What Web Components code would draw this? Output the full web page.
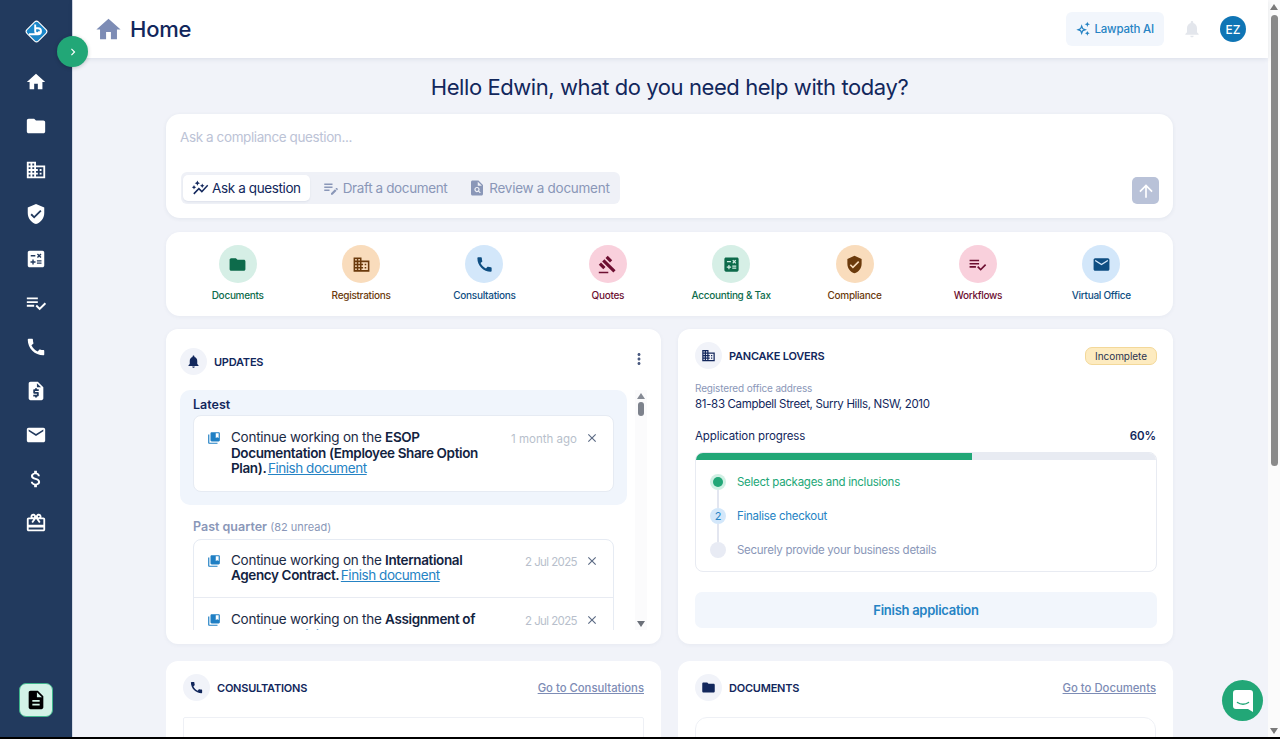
<!DOCTYPE html>
<html>
<head>
<meta charset="utf-8">
<title>Home</title>
<style>
html, body { margin: 0; height: 100%; overflow: hidden; }
body { font-family: Inter, "Noto Sans", sans-serif; color: #12275c; background: #000; }
</style>
</head>
<body>
<lp-app></lp-app>

<script>
const ICONS = {
    home: "M10 20v-6h4v6h5v-8h3L12 3 2 12h3v8z",
    folder: "M10 4H4c-1.1 0-1.99.9-1.99 2L2 18c0 1.1.9 2 2 2h16c1.1 0 2-.9 2-2V8c0-1.1-.9-2-2-2h-8l-2-2z",
    domain: "M12 7V3H2v18h20V7H12zM6 19H4v-2h2v2zm0-4H4v-2h2v2zm0-4H4V9h2v2zm0-4H4V5h2v2zm4 12H8v-2h2v2zm0-4H8v-2h2v2zm0-4H8V9h2v2zm0-4H8V5h2v2zm10 12h-8v-2h2v-2h-2v-2h2v-2h-2V9h8v10zm-2-8h-2v2h2v-2zm0 4h-2v2h2v-2z",
    shield: "M12 1L3 5v6c0 5.55 3.84 10.74 9 12 5.16-1.26 9-6.45 9-12V5l-9-4zm-2 16l-4-4 1.41-1.41L10 14.17l6.59-6.59L18 9l-8 8z",
    calculate: "M19,3H5C3.9,3,3,3.9,3,5v14c0,1.1,0.9,2,2,2h14c1.1,0,2-0.9,2-2V5C21,3.9,20.1,3,19,3z M13.03,7.06L14.09,6l1.41,1.41L16.91,6l1.06,1.06l-1.41,1.41l1.41,1.41l-1.06,1.06L15.5,9.54l-1.41,1.41l-1.06-1.06l1.41-1.41L13.03,7.06z M6.25,7.72h5v1.5h-5V7.72z M11.5,16h-2v2H8v-2H6v-1.5h2v-2h1.5v2h2V16z M18,17.25h-5v-1.5h5V17.25z M18,14.75h-5v-1.5h5V14.75z",
    checklist: "M14 10H2v2h12v-2zm0-4H2v2h12V6zM2 16h8v-2H2v2zm19.5-4.5L23 13l-6.99 7-4.51-4.5L13 14l3.01 3 5.49-5.5z",
    phone: "M20.01 15.38c-1.23 0-2.42-.2-3.53-.56-.35-.12-.74-.03-1.01.24l-1.57 1.97c-2.83-1.35-5.48-3.9-6.89-6.83l1.95-1.66c.27-.28.35-.67.24-1.02-.37-1.11-.56-2.3-.56-3.53 0-.54-.45-.99-.99-.99H4.19C3.65 3 3 3.24 3 3.99 3 13.28 10.73 21 20.01 21c.71 0 .99-.63.99-1.18v-3.45c0-.54-.45-.99-.99-.99z",
    quote: "M14 2H6c-1.1 0-1.99.9-1.99 2L4 20c0 1.1.89 2 1.99 2H18c1.1 0 2-.9 2-2V8l-6-6zm1 10h-4v1h3c.55 0 1 .45 1 1v3c0 .55-.45 1-1 1h-1v1h-2v-1H9v-2h4v-1h-3c-.55 0-1-.45-1-1v-3c0-.55.45-1 1-1h1V9h2v1h2v2zm-2-4V3.5L17.5 8H13z",
    email: "M20 4H4c-1.1 0-1.99.9-1.99 2L2 18c0 1.1.9 2 2 2h16c1.1 0 2-.9 2-2V6c0-1.1-.9-2-2-2zm0 4l-8 5-8-5V6l8 5 8-5v2z",
    money: "M11.8 10.9c-2.27-.59-3-1.2-3-2.15 0-1.09 1.01-1.85 2.7-1.85 1.78 0 2.44.85 2.5 2.1h2.21c-.07-1.72-1.12-3.3-3.21-3.81V3h-3v2.16c-1.94.42-3.5 1.68-3.5 3.61 0 2.31 1.91 3.46 4.7 4.13 2.5.6 3 1.48 3 2.41 0 .69-.49 1.79-2.7 1.79-2.06 0-2.87-.92-2.98-2.1h-2.2c.12 2.19 1.76 3.42 3.68 3.83V21h3v-2.15c1.95-.37 3.5-1.5 3.5-3.55 0-2.84-2.43-3.81-4.7-4.4z",
    redeem: "M20 6h-2.18c.11-.31.18-.65.18-1 0-1.66-1.34-3-3-3-1.05 0-1.96.54-2.5 1.35l-.5.67-.5-.68C10.96 2.54 10.05 2 9 2 7.34 2 6 3.34 6 5c0 .35.07.69.18 1H4c-1.11 0-1.99.89-1.99 2L2 19c0 1.11.89 2 2 2h16c1.11 0 2-.89 2-2V8c0-1.11-.89-2-2-2zm-5-2c.55 0 1 .45 1 1s-.45 1-1 1-1-.45-1-1 .45-1 1-1zM9 4c.55 0 1 .45 1 1s-.45 1-1 1-1-.45-1-1 .45-1 1-1zm11 15H4v-2h16v2zm0-5H4V8h5.08L7 10.83 8.62 12 11 8.76l1-1.36 1 1.36L15.38 12 17 10.83 14.92 8H20v6z",
    description: "M14 2H6c-1.1 0-1.99.9-1.99 2L4 20c0 1.1.89 2 1.99 2H18c1.1 0 2-.9 2-2V8l-6-6zm2 16H8v-2h8v2zm0-4H8v-2h8v2zm-3-5V3.5L18.5 9H13z",
    gavel: "M1 21h12v2H1zM5.245 8.07l2.83-2.827 14.14 14.142-2.828 2.828zM12.317 1l5.657 5.656-2.83 2.83-5.654-5.66zM3.825 9.485l5.657 5.657-2.828 2.828-5.657-5.657z",
    bell: "M12 22c1.1 0 2-.9 2-2h-4c0 1.1.89 2 2 2zm6-6v-5c0-3.07-1.64-5.64-4.5-6.32V4c0-.83-.67-1.5-1.5-1.5s-1.5.67-1.5 1.5v.68C7.63 5.36 6 7.92 6 11v5l-2 2v1h16v-1l-2-2z",
    bookmarks: "M4 6H2v14c0 1.1.9 2 2 2h14v-2H4V6zm16-4H8c-1.1 0-2 .9-2 2v12c0 1.1.9 2 2 2h12c1.1 0 2-.9 2-2V4c0-1.1-.9-2-2-2zm0 10l-2.5-1.5L15 12V4h5v8z",
    close: "M19 6.41L17.59 5 12 10.59 6.41 5 5 6.41 10.59 12 5 17.59 6.41 19 12 13.41 17.59 19 19 17.59 13.41 12z",
    more: "M12 8c1.1 0 2-.9 2-2s-.9-2-2-2-2 .9-2 2 .9 2 2 2zm0 2c-1.1 0-2 .9-2 2s.9 2 2 2 2-.9 2-2-.9-2-2-2zm0 6c-1.1 0-2 .9-2 2s.9 2 2 2 2-.9 2-2-.9-2-2-2z",
    editNote: "M3 10h11v2H3v-2zm0-2h11V6H3v2zm0 8h7v-2H3v2zm15.01-3.13l.71-.71c.39-.39 1.02-.39 1.41 0l.71.71c.39.39.39 1.02 0 1.41l-.71.71-2.12-2.12zm-.71.71l-5.3 5.3V21h2.12l5.3-5.3-2.12-2.12z",
    findPage: "M14 2H6c-1.1 0-1.99.9-1.99 2L4 20c0 1.1.89 2 1.99 2H18c1.1 0 2-.9 2-2V8l-6-6zm-1 1.5L18.5 9H13V3.5zM12 10.5a3.5 3.5 0 0 1 2.96 5.37L17 17.9 15.9 19l-2.03-2.04A3.5 3.5 0 1 1 12 10.5zm0 1.6a1.9 1.9 0 1 0 0 3.8 1.9 1.9 0 0 0 0-3.8z",
    autoGraph: "M14.06 9.94L12 9l2.06-.94L15 6l.94 2.06L18 9l-2.06.94L15 12l-.94-2.06zM4 14l.94-2.06L7 11l-2.06-.94L4 8l-.94 2.06L1 11l2.06.94L4 14zm4.5-5l1.09-2.41L12 5.5 9.59 4.41 8.5 2 7.41 4.41 5 5.5l2.41 1.09L8.5 9zm-4 11.5l6-6.01 4 4L23 8.93l-1.41-1.41-7.09 7.97-4-4L3 19l1.5 1.5z",
    up: "M4 12l1.41 1.41L11 7.83V20h2V7.83l5.58 5.59L20 12l-8-8-8 8z",
    chevron: "M10 6L8.59 7.41 13.17 12l-4.58 4.59L10 18l6-6z",
    sparkle: "M10 5l2.2 5.8L18 13l-5.8 2.2L10 21l-2.2-5.8L2 13l5.8-2.2L10 5zm0 5.2L9.1 12.1 7.2 13l1.9.9.9 1.9.9-1.9 1.9-.9-1.9-.9L10 10.2zM18.5 1l1.1 2.9 2.9 1.1-2.9 1.1L18.5 9l-1.1-2.9L14.5 5l2.9-1.1L18.5 1zm0 14l1.1 2.4 2.4 1.1-2.4 1.1-1.1 2.4-1.1-2.4-2.4-1.1 2.4-1.1 1.1-2.4z"
};

class LpIcon extends HTMLElement {
    static get observedAttributes() {
        return ["name", "size"]
    }

    constructor() {
        super();
        this.attachShadow({ mode: "open" });
    }

    connectedCallback() {
        this.render();
    }

    attributeChangedCallback() {
        this.render();
    }

    render() {
        const size = this.getAttribute("size") ?? 24;
        const path = ICONS[this.getAttribute("name")] ?? "";
        this.shadowRoot.innerHTML = `
            <style>
            :host { display: inline-flex; flex: none; width: ${size}px; height: ${size}px; color: inherit; }
            svg { width: 100%; height: 100%; fill: currentColor; display: block; }
            </style>
            <svg viewBox="0 0 24 24"><path fill-rule="evenodd" d="${path}"/></svg>`;
    }
}
customElements.define("lp-icon", LpIcon);

const sidebarTemplate = document.createElement("template");
sidebarTemplate.innerHTML = `
<style>
:host { display: flex; flex-direction: column; align-items: center; flex: none; width: 73px; height: 100%; background: #223a5e; border-right: 1px solid #d5dae6; box-sizing: border-box; }
.logo { margin-top: 19px; width: 25px; height: 25px; flex: none; }
nav { display: flex; flex-direction: column; align-items: center; gap: 22.15px; margin-top: 27px; color: #fff; }
.doc { margin-top: auto; margin-bottom: 20px; width: 34px; height: 34px; box-sizing: border-box; border-radius: 7px; background: #d3f3e7; border: 1px solid #3fb58c; display: flex; align-items: center; justify-content: center; color: #000; }
</style>
<svg class="logo" viewBox="0 0 25 25">
  <rect x="4.5" y="4.5" width="16" height="16" rx="2.5" transform="rotate(45 12.5 12.5)" fill="#1a86c8" stroke="#fff" stroke-width="1.1"/>
  <path d="M5 15.2h9a3 3 0 0 0 0-6h-2.6M11.2 5.5v6.8a2 2 0 0 0 4 0" fill="none" stroke="#fff" stroke-width="1.9"/>
</svg>
<nav>
  <lp-icon name="home" size="22"></lp-icon>
  <lp-icon name="folder" size="22"></lp-icon>
  <lp-icon name="domain" size="22"></lp-icon>
  <lp-icon name="shield" size="22"></lp-icon>
  <lp-icon name="calculate" size="22"></lp-icon>
  <lp-icon name="checklist" size="22"></lp-icon>
  <lp-icon name="phone" size="22"></lp-icon>
  <lp-icon name="quote" size="22"></lp-icon>
  <lp-icon name="email" size="22"></lp-icon>
  <lp-icon name="money" size="22"></lp-icon>
  <lp-icon name="redeem" size="22"></lp-icon>
</nav>
<div class="doc"><lp-icon name="description" size="22"></lp-icon></div>
`;

class LpSidebar extends HTMLElement {
    connectedCallback() {
        this.attachShadow({ mode: "open" }).appendChild(sidebarTemplate.content.cloneNode(true));
    }
}
customElements.define("lp-sidebar", LpSidebar);

const headerTemplate = document.createElement("template");
headerTemplate.innerHTML = `
<style>
:host { display: flex; align-items: center; flex: none; height: 58px; background: #fff; box-shadow: 0 1px 5px rgba(30,50,90,.1); position: relative; z-index: 2; padding: 0 22px 0 21px; }
h1 { font-size: 22px; font-weight: 500; margin: 0 0 0 7px; color: #12275c; letter-spacing: -.25px; }
.house { color: #7d8cb5; }
.ai { margin-left: auto; display: flex; align-items: center; gap: 3px; height: 34px; padding: 0 10px 0 9px; background: #f2f6fc; border-radius: 6px; color: #2583c4; font-size: 11.5px; font-weight: 500; letter-spacing: -.2px; }
.bell { color: #e3e6ec; margin-left: 18px; }
.avatar { margin-left: 18px; width: 26px; height: 26px; border-radius: 50%; background: #0f75b5; color: #fff; font-size: 12px; font-weight: 500; display: flex; align-items: center; justify-content: center; }
</style>
<lp-icon class="house" name="home" size="29"></lp-icon>
<h1>Home</h1>
<div class="ai"><lp-icon name="sparkle" size="16"></lp-icon>Lawpath AI</div>
<lp-icon class="bell" name="bell" size="20"></lp-icon>
<div class="avatar">EZ</div>
`;

class LpHeader extends HTMLElement {
    connectedCallback() {
        this.attachShadow({ mode: "open" }).appendChild(headerTemplate.content.cloneNode(true));
    }
}
customElements.define("lp-header", LpHeader);

const askTemplate = document.createElement("template");
askTemplate.innerHTML = `
<style>
:host { display: block; height: 104px; box-sizing: border-box; background: #fff; border-radius: 14px; box-shadow: 0 1px 4px rgba(30,50,90,.07); padding: 15px 14px 13px; position: relative; }
.placeholder { font-size: 13.5px; color: #bcc3d6; line-height: 17px; letter-spacing: -.4px; }
.row { display: flex; align-items: flex-end; justify-content: space-between; margin-top: 26px; }
.tabs { display: flex; align-items: center; height: 32px; box-sizing: border-box; padding: 0 0 0 2px; margin-left: 1px; background: #eff1f7; border-radius: 6px; gap: 4px; }
.tab { display: flex; align-items: center; gap: 3px; height: 26px; padding: 0 9px 0 8px; font-size: 13.5px; letter-spacing: -.38px; color: #8a97b8; border-radius: 5px; white-space: nowrap; }
.tab:last-child { letter-spacing: -.28px; padding-right: 10px; }
.tab.active { background: #fff; color: #12275c; box-shadow: 0 1px 2px rgba(30,50,90,.08); }
.send { width: 27px; height: 27px; border-radius: 5px; background: #b9c2d8; color: #fff; display: flex; align-items: center; justify-content: center; }
</style>
<div class="placeholder">Ask a compliance question...</div>
<div class="row">
  <div class="tabs">
    <div class="tab active"><lp-icon name="autoGraph" size="18"></lp-icon>Ask a question</div>
    <div class="tab"><lp-icon name="editNote" size="18"></lp-icon>Draft a document</div>
    <div class="tab"><lp-icon name="findPage" size="18"></lp-icon>Review a document</div>
  </div>
  <div class="send"><lp-icon name="up" size="20"></lp-icon></div>
</div>
`;

class LpAsk extends HTMLElement {
    connectedCallback() {
        this.attachShadow({ mode: "open" }).appendChild(askTemplate.content.cloneNode(true));
    }
}
customElements.define("lp-ask", LpAsk);

const shortcutTemplate = document.createElement("template");
shortcutTemplate.innerHTML = `
<style>
:host { display: flex; flex-direction: column; align-items: center; font-size: 10px; font-weight: 500; letter-spacing: -.28px; }
.circle { width: 38px; height: 38px; border-radius: 50%; display: flex; align-items: center; justify-content: center; margin-bottom: 6px; }
</style>
<div class="circle"><lp-icon size="19"></lp-icon></div>
<slot></slot>
`;

class LpShortcut extends HTMLElement {
    connectedCallback() {
        const tone = {
            green: ["#d6efe6", "#0d6b4b"],
            orange: ["#f9dcbc", "#6b3a0c"],
            blue: ["#d3e7fa", "#0e4e82"],
            pink: ["#f9d0dc", "#6d0f31"]
        }[this.getAttribute("tone")];
        const copy = shortcutTemplate.content.cloneNode(true);
        copy.querySelector(".circle").style.background = tone[0];
        copy.querySelector("lp-icon").setAttribute("name", this.getAttribute("icon"));
        this.style.color = tone[1];
        this.attachShadow({ mode: "open" }).appendChild(copy);
    }
}
customElements.define("lp-shortcut", LpShortcut);

const shortcutsTemplate = document.createElement("template");
shortcutsTemplate.innerHTML = `
<style>
:host { display: grid; grid-template-columns: repeat(8, 1fr); height: 84px; box-sizing: border-box; background: #fff; border-radius: 14px; padding: 13px 10px 0; box-shadow: 0 1px 4px rgba(30,50,90,.05); }
</style>
<slot></slot>
`;

class LpShortcuts extends HTMLElement {
    connectedCallback() {
        this.attachShadow({ mode: "open" }).appendChild(shortcutsTemplate.content.cloneNode(true));
    }
}
customElements.define("lp-shortcuts", LpShortcuts);

const cardHeadTemplate = document.createElement("template");
cardHeadTemplate.innerHTML = `
<style>
:host { display: flex; align-items: center; gap: 7px; }
.dot { width: 27px; height: 27px; border-radius: 50%; background: #f1f3f9; display: flex; align-items: center; justify-content: center; color: #12275c; }
.title { font-size: 11px; font-weight: 600; color: #12275c; letter-spacing: -.22px; }
.end { margin-left: auto; display: flex; align-items: center; }
</style>
<div class="dot"><lp-icon size="15"></lp-icon></div>
<div class="title"><slot></slot></div>
<div class="end"><slot name="end"></slot></div>
`;

class LpCardHead extends HTMLElement {
    connectedCallback() {
        const copy = cardHeadTemplate.content.cloneNode(true);
        copy.querySelector("lp-icon").setAttribute("name", this.getAttribute("icon"));
        this.attachShadow({ mode: "open" }).appendChild(copy);
    }
}
customElements.define("lp-card-head", LpCardHead);

const noticeTemplate = document.createElement("template");
noticeTemplate.innerHTML = `
<style>
:host { display: flex; align-items: flex-start; padding: 13px 14px 14px 13px; box-sizing: border-box; font-size: 13.5px; letter-spacing: -.25px; line-height: 15.6px; color: #1c2b45; }
:host(:not(:last-child)) { border-bottom: 1px solid #e8ebf2; padding-bottom: 13px; }
:host(:last-child:not(:first-child)) { padding-top: 14px; }
.book { color: #1f7fc4; margin: 1px 10px 0 0; }
.text { flex: none; width: 252px; }
.time { flex: none; font-size: 11.5px; letter-spacing: var(--time-spacing, 0); color: #b8bfcc; margin: 2px 0 0 auto; }
.x { color: #5c6b85; margin: 1px 0 0 8px; }
::slotted(b) { font-weight: 600; color: #12233f; letter-spacing: -.38px; }
::slotted(a) { color: #2583c4; text-decoration: underline; letter-spacing: -.45px; margin-left: -2px; }
</style>
<lp-icon class="book" name="bookmarks" size="14"></lp-icon>
<div class="text"><slot></slot></div>
<span class="time"></span>
<lp-icon class="x" name="close" size="14"></lp-icon>
`;

class LpNotice extends HTMLElement {
    connectedCallback() {
        const copy = noticeTemplate.content.cloneNode(true);
        copy.querySelector(".time").textContent = this.getAttribute("time");
        this.attachShadow({ mode: "open" }).appendChild(copy);
    }
}
customElements.define("lp-notice", LpNotice);

const updatesTemplate = document.createElement("template");
updatesTemplate.innerHTML = `
<style>
:host { display: flex; flex-direction: column; box-sizing: border-box; height: 315px; background: #fff; border-radius: 12px; padding: 19px 14px 14px 14px; box-shadow: 0 1px 4px rgba(30,50,90,.05); }
.more { color: #4a5a80; margin: -6px -1px 0 0; }
.body { display: flex; flex: 1; min-height: 0; margin-top: 15px; }
.list { flex: none; width: 447px; overflow: hidden; }
.latest { background: #f0f5fc; border-radius: 10px; padding: 7px 13px 13px; }
h3 { font-size: 12.5px; font-weight: 600; margin: 0 0 3px; line-height: 15px; color: #12275c; }
.past { padding: 14px 13px 0; --time-spacing: -.6px; }
.past h3 { color: #8a97b8; margin: 0; }
.past h3 span { font-weight: 400; font-size: 11px; }
.group { background: #fff; border: 1px solid #e6ebf3; border-radius: 8px; }
.latest lp-notice { padding-top: 14px; }
.past .group { border-radius: 8px 8px 0 0; margin-top: 4px; }
.bar { flex: none; width: 12px; margin-left: 8px; background: #fbfbfc; display: flex; flex-direction: column; align-items: center; }
.tri-up { width: 0; height: 0; border: 4.5px solid transparent; border-top: 0; border-bottom: 6px solid #858a94; margin-top: 3px; }
.tri-down { width: 0; height: 0; border: 4.5px solid transparent; border-bottom: 0; border-top: 6px solid #6b7079; margin-top: auto; margin-bottom: 3px; }
.thumb { width: 6px; height: 14px; border-radius: 3px; background: #7d828c; margin-top: 3px; }
</style>
<lp-card-head icon="bell">UPDATES
  <lp-icon class="more" slot="end" name="more" size="18"></lp-icon>
</lp-card-head>
<div class="body">
  <div class="list">
    <div class="latest">
      <h3>Latest</h3>
      <div class="group">
        <lp-notice time="1 month ago">Continue working on the <b>ESOP Documentation (Employee Share Option Plan).</b> <a>Finish document</a></lp-notice>
      </div>
    </div>
    <div class="past">
      <h3>Past quarter <span>(82 unread)</span></h3>
      <div class="group">
        <lp-notice time="2 Jul 2025">Continue working on the <b>International Agency Contract.</b> <a>Finish document</a></lp-notice>
        <lp-notice time="2 Jul 2025">Continue working on the <b>Assignment of Copyright.</b> <a>Finish document</a></lp-notice>
      </div>
    </div>
  </div>
  <div class="bar"><div class="tri-up"></div><div class="thumb"></div><div class="tri-down"></div></div>
</div>
`;

class LpUpdates extends HTMLElement {
    connectedCallback() {
        this.attachShadow({ mode: "open" }).appendChild(updatesTemplate.content.cloneNode(true));
    }
}
customElements.define("lp-updates", LpUpdates);

const companyTemplate = document.createElement("template");
companyTemplate.innerHTML = `
<style>
:host { display: flex; flex-direction: column; box-sizing: border-box; height: 315px; background: #fff; border-radius: 12px; padding: 13px 16px 0 17px; box-shadow: 0 1px 4px rgba(30,50,90,.05); color: #12275c; }
.badge { font-size: 10px; letter-spacing: -.05px; padding: 0 9px; height: 18px; line-height: 16px; box-sizing: border-box; border: 1px solid #f3d899; background: #fdebc0; border-radius: 7px; color: #2b3350; }
.label { font-size: 10px; letter-spacing: -.15px; color: #8a97b8; margin-top: 12px; line-height: 14px; }
.addr { font-size: 11.5px; letter-spacing: -.33px; line-height: 15px; margin-top: 2px; }
.progress { display: flex; justify-content: space-between; font-size: 11.5px; letter-spacing: -.1px; margin-top: 17px; line-height: 15px; }
.progress b { font-weight: 600; font-size: 11.5px; margin-right: 1px; }
.box { margin-top: 8px; height: 120px; box-sizing: border-box; border: 1px solid #e8ebf2; border-radius: 8px; overflow: hidden; }
.track { height: 7px; background: #e8ebf2; }
.fill { height: 100%; width: 60%; background: #22a777; }
.steps { display: flex; flex-direction: column; gap: 18px; padding: 14px 14px 0; position: relative; }
.step { display: flex; align-items: center; gap: 11px; font-size: 11.5px; letter-spacing: -.27px; line-height: 16px; }
.mark { width: 16px; height: 16px; border-radius: 50%; display: flex; align-items: center; justify-content: center; font-size: 11px; flex: none; position: relative; }
.mark.done { background: #d0f0e4; }
.mark.done::after { content: ""; width: 10px; height: 10px; border-radius: 50%; background: #22a777; }
.mark.now { background: #d3e7fa; color: #2583c4; }
.mark.todo { background: #e8ebf4; }
.step:not(:last-child) .mark::before { content: ""; position: absolute; left: 7px; top: 16px; width: 2px; height: 18px; background: #e3e6f0; }
.step.g { color: #22a777; }
.step.b { color: #2583c4; }
.step.t { color: #8a97b8; }
button { margin-top: 20px; height: 36px; border: 0; border-radius: 7px; background: #f2f6fc; color: #2583c4; font: 600 13px Inter, "Noto Sans", sans-serif; letter-spacing: -.28px; }
</style>
<lp-card-head icon="domain">PANCAKE LOVERS
  <span class="badge" slot="end">Incomplete</span>
</lp-card-head>
<div class="label">Registered office address</div>
<div class="addr">81-83 Campbell Street, Surry Hills, NSW, 2010</div>
<div class="progress"><span>Application progress</span><b>60%</b></div>
<div class="box">
  <div class="track"><div class="fill"></div></div>
  <div class="steps">
    <div class="step g"><span class="mark done"></span>Select packages and inclusions</div>
    <div class="step b"><span class="mark now">2</span>Finalise checkout</div>
    <div class="step t"><span class="mark todo"></span>Securely provide your business details</div>
  </div>
</div>
<button>Finish application</button>
`;

class LpCompany extends HTMLElement {
    connectedCallback() {
        this.attachShadow({ mode: "open" }).appendChild(companyTemplate.content.cloneNode(true));
    }
}
customElements.define("lp-company", LpCompany);

const linkCardTemplate = document.createElement("template");
linkCardTemplate.innerHTML = `
<style>
:host { display: block; height: 76px; overflow: hidden; box-sizing: border-box; background: #fff; border-radius: 12px 12px 0 0; padding: 13px 17px 0; }
a { font-size: 11.3px; font-weight: 500; color: #7d8cb5; text-decoration: underline; }
.inner { margin-top: 16px; height: 40px; border: 1px solid #eef0f5; border-radius: var(--inner-radius, 2px); }
</style>
<lp-card-head><slot></slot><a slot="end"></a></lp-card-head>
<div class="inner"></div>
`;

class LpLinkCard extends HTMLElement {
    connectedCallback() {
        const copy = linkCardTemplate.content.cloneNode(true);
        copy.querySelector("lp-card-head").setAttribute("icon", this.getAttribute("icon"));
        copy.querySelector("a").textContent = this.getAttribute("link");
        this.attachShadow({ mode: "open" }).appendChild(copy);
    }
}
customElements.define("lp-link-card", LpLinkCard);

const pageScrollTemplate = document.createElement("template");
pageScrollTemplate.innerHTML = `
<style>
:host { display: flex; flex-direction: column; align-items: center; flex: none; width: 12px; background: #fbfbfb; }
.up { width: 0; height: 0; border: 4.5px solid transparent; border-top: 0; border-bottom: 6px solid #7a7a7a; margin-top: 4px; }
.thumb { width: 7px; height: 451px; border-radius: 4px; background: #8a8a8a; margin-top: 5px; }
.down { width: 0; height: 0; border: 4.5px solid transparent; border-bottom: 0; border-top: 6px solid #7a7a7a; margin-top: auto; margin-bottom: 3px; }
</style>
<div class="up"></div><div class="thumb"></div><div class="down"></div>
`;

class LpPageScroll extends HTMLElement {
    connectedCallback() {
        this.attachShadow({ mode: "open" }).appendChild(pageScrollTemplate.content.cloneNode(true));
    }
}
customElements.define("lp-page-scroll", LpPageScroll);

const appTemplate = document.createElement("template");
appTemplate.innerHTML = `
<style>
:host { display: flex; height: 737px; position: relative; overflow: hidden; background: #f1f3f9; }
.main { flex: 1; min-width: 0; display: flex; flex-direction: column; }
.content { flex: 1; min-height: 0; overflow: hidden; padding: 0 95px 0 93px; }
h2 { text-align: center; font-size: 22px; font-weight: 400; letter-spacing: -.42px; margin: 0; padding: 16px 0 14px; line-height: 26px; color: #12275c; }
.stack { display: flex; flex-direction: column; gap: 14px; }
.cols { display: grid; grid-template-columns: 495px 495px; column-gap: 17px; row-gap: 17px; margin-top: -1px; }
.rounded { --inner-radius: 12px; }
.expand { position: absolute; left: 57px; top: 36px; width: 31px; height: 31px; border-radius: 50%; background: #22a777; color: #fff; display: flex; align-items: center; justify-content: center; box-shadow: 0 1px 4px rgba(0,0,0,.2); z-index: 3; }
.chat { position: absolute; left: 1222px; top: 680px; width: 41px; height: 41px; border-radius: 50%; background: #22a777; display: flex; align-items: center; justify-content: center; z-index: 3; }
</style>
<lp-sidebar></lp-sidebar>
<div class="main">
  <lp-header></lp-header>
  <div class="content">
    <h2>Hello Edwin, what do you need help with today?</h2>
    <div class="stack">
      <lp-ask></lp-ask>
      <lp-shortcuts>
        <lp-shortcut tone="green" icon="folder">Documents</lp-shortcut>
        <lp-shortcut tone="orange" icon="domain">Registrations</lp-shortcut>
        <lp-shortcut tone="blue" icon="phone">Consultations</lp-shortcut>
        <lp-shortcut tone="pink" icon="gavel">Quotes</lp-shortcut>
        <lp-shortcut tone="green" icon="calculate">Accounting &amp; Tax</lp-shortcut>
        <lp-shortcut tone="orange" icon="shield">Compliance</lp-shortcut>
        <lp-shortcut tone="pink" icon="checklist">Workflows</lp-shortcut>
        <lp-shortcut tone="blue" icon="email">Virtual Office</lp-shortcut>
      </lp-shortcuts>
      <div class="cols">
        <lp-updates></lp-updates>
        <lp-company></lp-company>
        <lp-link-card icon="phone" link="Go to Consultations">CONSULTATIONS</lp-link-card>
        <lp-link-card class="rounded" icon="folder" link="Go to Documents">DOCUMENTS</lp-link-card>
      </div>
    </div>
  </div>
</div>
<lp-page-scroll></lp-page-scroll>
<div class="expand"><lp-icon name="chevron" size="14"></lp-icon></div>
<div class="chat">
  <svg width="20" height="22" viewBox="0 0 20 22"><path d="M3 0h14a3 3 0 0 1 3 3v19l-5-3H3a3 3 0 0 1-3-3V3a3 3 0 0 1 3-3z" fill="#fff"/><path d="M4.5 12.5c3 2.2 8 2.2 11 0" fill="none" stroke="#22a777" stroke-width="1.5" stroke-linecap="round"/></svg>
</div>
`;

class LpApp extends HTMLElement {
    connectedCallback() {
        this.attachShadow({ mode: "open" }).appendChild(appTemplate.content.cloneNode(true));
    }
}
customElements.define("lp-app", LpApp);
</script>
</body>
</html>
